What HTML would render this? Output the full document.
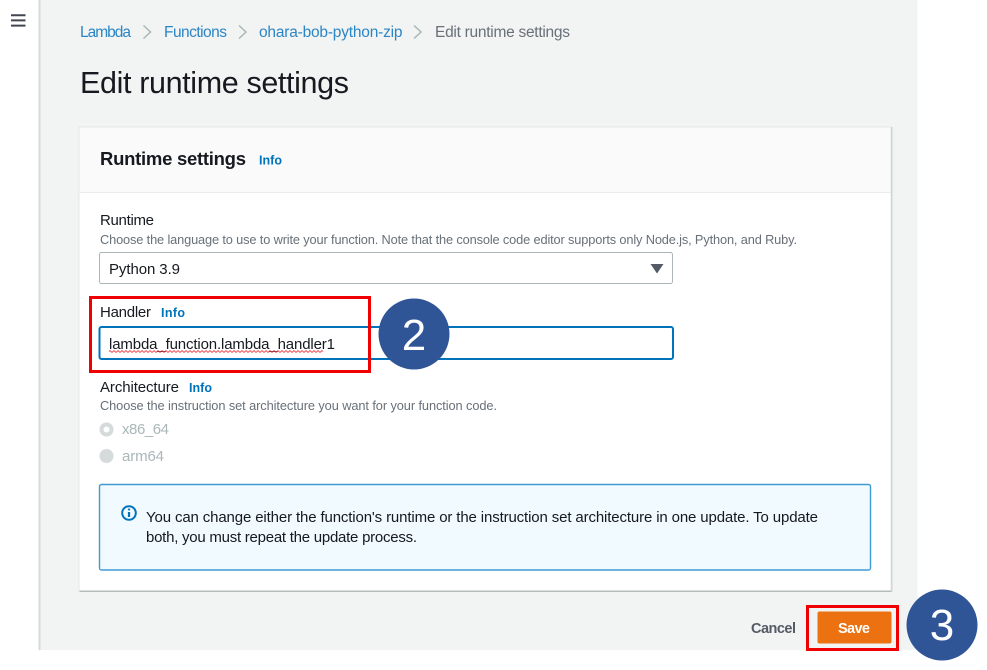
<!DOCTYPE html>
<html>
<head>
<meta charset="utf-8">
<title>Edit runtime settings</title>
<style>
html,body{margin:0;padding:0;background:#fff;width:987px;height:670px;overflow:hidden}
svg{display:block}
text{font-family:"Liberation Sans",sans-serif}
</style>
</head>
<body>
<svg width="987" height="670" viewBox="0 0 987 670" xmlns="http://www.w3.org/2000/svg">
  <rect width="987" height="670" fill="#fff"/>
  <rect x="40" y="0" width="877.500" height="650" fill="#f2f3f3"/>
  <rect x="38.500" y="0" width="2" height="650" fill="#d5dbdb"/>
  <!-- hamburger -->
  <path d="M11 15.200H25.500M11 20.400H25.500M11 25.600H25.500" stroke="#414750" stroke-width="2" fill="none"/>
  <!-- breadcrumb -->
  <g font-size="15.500" fill="#2b86c5">
    <text x="80" y="37" textLength="51" lengthAdjust="spacing">Lambda</text>
    <text x="164" y="37" textLength="63" lengthAdjust="spacing">Functions</text>
    <text x="259" y="37" textLength="143.500" lengthAdjust="spacing">ohara-bob-python-zip</text>
  </g>
  <text x="435" y="37" font-size="15.500" fill="#687078" textLength="135" lengthAdjust="spacing">Edit runtime settings</text>
  <path d="M143.500 25.500L150.500 32L143.500 38.500M239 25.500L246 32L239 38.500M414 25.500L421 32L414 38.500" stroke="#aab7b8" stroke-width="1.500" fill="none"/>
  <!-- title -->
  <text x="80" y="93" font-size="30.500" fill="#16191f" textLength="269" lengthAdjust="spacing">Edit runtime settings</text>
  <!-- panel -->
  <rect x="79" y="127" width="812" height="464" fill="#fff" stroke="#e4e7e7" stroke-width="1"/>
  <rect x="79.500" y="590.500" width="812" height="1.500" fill="#b4bcbc"/>
  <rect x="891" y="127" width="1.500" height="465" fill="#d0d5d5"/>
  <rect x="79.500" y="127.500" width="811" height="65" fill="#fafafa"/>
  <rect x="79.500" y="192" width="811" height="1" fill="#eaeded"/>
  <text x="100" y="165" font-size="18.500" font-weight="bold" fill="#16191f" textLength="146" lengthAdjust="spacing">Runtime settings</text>
  <text x="259" y="164.500" font-size="12.500" font-weight="bold" fill="#0073bb" textLength="23" lengthAdjust="spacing">Info</text>
  <!-- runtime -->
  <text x="100" y="225" font-size="15" fill="#16191f" textLength="54" lengthAdjust="spacing">Runtime</text>
  <text x="100" y="244" font-size="12.800" fill="#687078" textLength="697" lengthAdjust="spacing">Choose the language to use to write your function. Note that the console code editor supports only Node.js, Python, and Ruby.</text>
  <rect x="99.500" y="252.500" width="573" height="31" rx="2" fill="#fff" stroke="#aab7b8"/>
  <text x="109" y="274" font-size="15" fill="#16191f" textLength="71" lengthAdjust="spacing">Python 3.9</text>
  <path d="M650.500 264H663.500L657 273.500Z" fill="#545b64"/>
  <!-- handler -->
  <text x="100" y="317" font-size="15" fill="#16191f" textLength="51" lengthAdjust="spacing">Handler</text>
  <text x="161" y="317" font-size="12.500" font-weight="bold" fill="#0073bb" textLength="24" lengthAdjust="spacing">Info</text>
  <rect x="99.500" y="327" width="573.500" height="32" rx="2" fill="#fff" stroke="#0073bb" stroke-width="2"/>
  <text x="109" y="349" font-size="15" fill="#16191f" textLength="226" lengthAdjust="spacing">lambda_function.lambda_handler1</text>
  <path d="M109 351.500q1 -1.500 2 0t2 0t2 0t2 0t2 0t2 0t2 0t2 0t2 0t2 0t2 0t2 0t2 0t2 0t2 0t2 0t2 0t2 0t2 0t2 0t2 0t2 0t2 0t2 0t2 0t2 0t2 0t2 0t2 0t2 0t2 0t2 0t2 0t2 0t2 0t2 0t2 0t2 0t2 0t2 0t2 0t2 0t2 0t2 0t2 0t2 0t2 0t2 0t2 0t2 0t2 0t2 0t2 0t2 0t2 0t2 0t2 0t2 0t2 0t2 0t2 0t2 0t2 0t2 0t2 0t2 0t2 0t2 0t2 0t2 0t2 0t2 0t2 0t2 0t2 0t2 0t2 0t2 0t2 0t2 0t2 0t2 0t2 0t2 0t2 0t2 0t2 0t2 0t2 0t2 0t2 0t2 0t2 0t2 0t2 0t2 0t2 0t2 0t2 0t2 0t2 0t2 0t2 0t2 0t2 0t2 0t2 0" stroke="#e8444d" stroke-width="1" fill="none"/>
  <rect x="90.500" y="297.500" width="279" height="74" fill="none" stroke="#f00000" stroke-width="3"/>
  <circle cx="414" cy="334" r="35.500" fill="#2f5597"/>
  <text x="414" y="350" font-size="44" fill="#fff" text-anchor="middle">2</text>
  <!-- architecture -->
  <text x="100" y="392" font-size="15" fill="#16191f" textLength="79" lengthAdjust="spacing">Architecture</text>
  <text x="189" y="392" font-size="12.500" font-weight="bold" fill="#0073bb" textLength="23" lengthAdjust="spacing">Info</text>
  <text x="100" y="410" font-size="12.800" fill="#687078" textLength="397" lengthAdjust="spacing">Choose the instruction set architecture you want for your function code.</text>
  <circle cx="106.500" cy="429.500" r="7" fill="#d5dbdb"/>
  <circle cx="106.500" cy="429.500" r="3" fill="#fff"/>
  <circle cx="106.500" cy="456" r="7" fill="#d5dbdb"/>
  <text x="122" y="434" font-size="15" fill="#aab7b8" textLength="47" lengthAdjust="spacing">x86_64</text>
  <text x="122" y="461" font-size="15" fill="#aab7b8" textLength="42" lengthAdjust="spacing">arm64</text>
  <!-- info box -->
  <rect x="99.500" y="484.500" width="771" height="85.500" rx="2" fill="#f1faff" stroke="#3f9ad3" stroke-width="1.400"/>
  <circle cx="129" cy="513" r="6.800" fill="none" stroke="#0073bb" stroke-width="2"/>
  <path d="M129 512V517M129 508.600V510.400" stroke="#0073bb" stroke-width="2.200" fill="none"/>
  <text x="146" y="522" font-size="15" fill="#16191f" textLength="672" lengthAdjust="spacing">You can change either the function's runtime or the instruction set architecture in one update. To update</text>
  <text x="146" y="542" font-size="15" fill="#16191f" textLength="271" lengthAdjust="spacing">both, you must repeat the update process.</text>
  <!-- footer -->
  <text x="751" y="633" font-size="14.500" font-weight="bold" fill="#545b64" textLength="45" lengthAdjust="spacing">Cancel</text>
  <rect x="817.500" y="611.500" width="74" height="32" rx="2" fill="#ec7211"/>
  <text x="838" y="633" font-size="14.500" font-weight="bold" fill="#fff" textLength="32" lengthAdjust="spacing">Save</text>
  <rect x="807.500" y="606.500" width="90" height="43" fill="none" stroke="#f00000" stroke-width="3"/>
  <circle cx="942" cy="625" r="35.500" fill="#2f5597"/>
  <text x="942" y="640" font-size="44" fill="#fff" text-anchor="middle">3</text>
</svg>
</body>
</html>
